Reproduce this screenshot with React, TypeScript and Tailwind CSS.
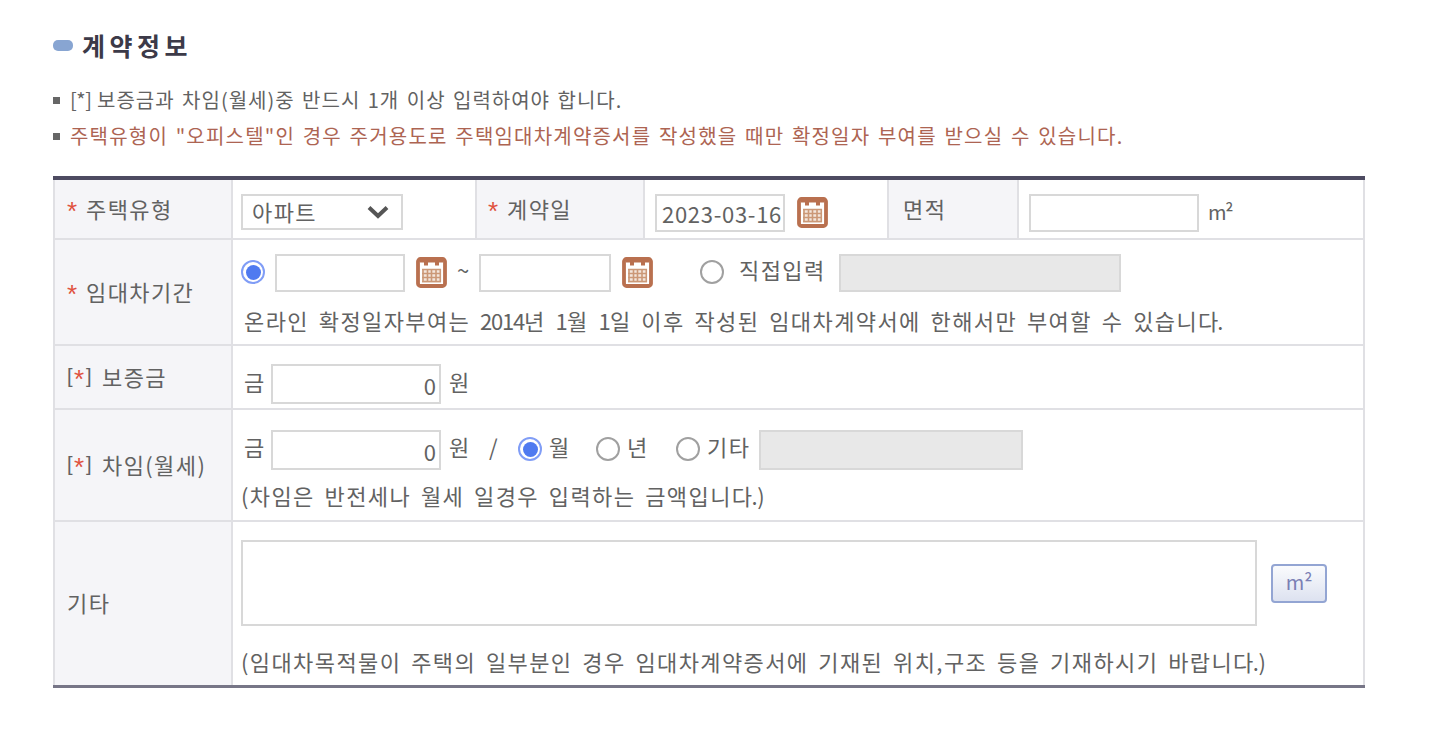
import React from 'react';
import clsx from 'clsx';

interface TextProps {
  children: React.ReactNode;
  className?: string;
}

function Label({ children, className }: TextProps) {
  return (
    <div className={clsx('flex shrink-0 items-center border-r-2 border-[#e0e0e4] bg-[#f5f5f8] pb-[3px]', className)}>
      {children}
    </div>
  );
}

function Required() {
  return <span className="w-[19px] shrink-0 pt-[6px] font-['Liberation_Sans'] text-[26px] tracking-normal text-[#e0523f]">*</span>;
}

function OneOf() {
  return (
    <span className="flex w-[35px] shrink-0 items-center font-['Liberation_Sans'] text-[20px] tracking-normal">
      <span className="w-[7px]">[</span>
      <span className="w-[11px] pt-[6px] text-[26px] text-[#e0523f]">*</span>
      <span className="pl-px">]</span>
    </span>
  );
}

function Field({ className, value, disabled }: { className?: string; value?: string; disabled?: boolean }) {
  return (
    <input
      type="text"
      defaultValue={value}
      disabled={disabled}
      className={clsx(
        'block shrink-0 border-2 border-[#d8d8d8] outline-none',
        disabled ? 'bg-[#e8e8e8]' : 'bg-white',
        className
      )}
    />
  );
}

function Radio({ checked, className }: { checked?: boolean; className?: string }) {
  return (
    <span
      className={clsx(
        'flex size-6 shrink-0 items-center justify-center rounded-full border-2 bg-white',
        checked ? 'border-[#809df6]' : 'border-[#a0a0a0]',
        className
      )}
    >
      {checked && <span className="size-[15px] rounded-full bg-[#4f7af0]" />}
    </span>
  );
}

function CalendarIcon({ className }: { className?: string }) {
  return (
    <svg viewBox="0 0 31 31" className={clsx('h-[31px] w-[31px] shrink-0', className)} fill="none">
      <rect x="2" y="2" width="27" height="27" rx="2.5" fill="#fff" stroke="#b9704f" strokeWidth="3.8" />
      <path d="M4 4h23v1.500H4z" fill="#b9704f" />
      <path d="M10 3v5.500M21 3v5.500" stroke="#b9704f" strokeWidth="4" />
      <path d="M6 12h19v14H6z" fill="#f3e6dc" />
      <path
        d="M6 12.500h19M6 16.500h19M6 20.500h19M6 24.500h19M7 12v13M11.500 12v13M15.500 12v13M20 12v13M24.300 12v13"
        stroke="#cb9877"
        strokeWidth="1.6"
      />
    </svg>
  );
}

export default function App() {
  return (
    <main className="h-[736px] w-[1438px] overflow-hidden bg-white pl-[53px] font-['Noto_Sans_CJK_KR',sans-serif] text-[22px] leading-6 tracking-[1.4px] whitespace-nowrap text-[#626262]">
      <h1 className="flex h-[86px] items-center pt-1 text-[25px] font-bold tracking-[4.500px] text-[#3c3a48]">
        <span className="mr-[9px] h-[11px] w-5 rounded-[5px] bg-[#88a5d2]" />
        계약정보
      </h1>

      <ul className="h-[90px] text-[20px]">
        <li className="flex h-7 items-center">
          <span className="mr-[10px] size-[7px] bg-[#666]" />
          <span className="w-[27px] tracking-[-0.4px]">[*]</span>
          <span className="tracking-[1px] [word-spacing:2px]">보증금과 차임(월세)중 반드시 1개 이상 입력하여야 합니다.</span>
        </li>
        <li className="mt-2 flex h-7 items-center tracking-[1.2px] text-[#ad6452] [word-spacing:2px]">
          <span className="mr-[10px] size-[7px] bg-[#666]" />
          주택유형이 "오피스텔"인 경우 주거용도로 주택임대차계약증서를 작성했을 때만 확정일자 부여를 받으실 수 있습니다.
        </li>
      </ul>

      <section className="w-[1312px] border-t-4 border-b-[3px] border-t-[#4d4b61] border-b-[#777687]">
        <div className="border-x-2 border-[#e0e0e4]">
          <div className="flex h-[60px] border-b-2 border-[#e0e0e4]">
            <Label className="w-[178px] pl-3"><Required />주택유형</Label>
            <div className="flex w-[242px] items-start pt-[14px] pl-2">
              <div className="flex h-9 w-[162px] items-center justify-between border-2 border-[#d8d8d8] pr-3 pl-[9px]">
                <span className="pb-[3px]">아파트</span>
                <svg viewBox="0 0 22 14" className="h-[14px] w-[22px]" fill="none">
                  <path d="M2 2.500L11 11L20 2.500" stroke="#555" strokeWidth="4" />
                </svg>
              </div>
            </div>
            <Label className="w-[170px] border-l-2 pl-[11px]"><Required />계약일</Label>
            <div className="flex w-[242px] items-start pt-[14px] pl-[10px]">
              <Field value="2023-03-16" className="h-[38px] w-[130px] pl-[5px] tracking-[0.7px]" />
              <CalendarIcon className="mt-[3px] ml-3" />
            </div>
            <Label className="w-[132px] border-l-2 pl-[14px]">면적</Label>
            <div className="flex items-start pt-[14px] pl-[10px]">
              <Field className="h-[38px] w-[170px]" />
              <span className="mt-[6px] ml-[9px] text-[20px] tracking-[-1.2px]">m²</span>
            </div>
          </div>

          <div className="flex h-[106px] border-b-2 border-[#e0e0e4]">
            <Label className="w-[178px] pl-3"><Required />임대차기간</Label>
            <div className="pt-[14px] pl-2">
              <div className="flex h-[38px]">
                <Radio checked className="mt-[6px]" />
                <Field className="ml-[10px] h-[38px] w-[130px]" />
                <CalendarIcon className="mt-[3px] ml-[11px]" />
                <span className="ml-[10px] w-[22px] pt-[3px]">~</span>
                <Field className="h-[38px] w-[132px]" />
                <CalendarIcon className="mt-[3px] ml-[11px]" />
                <Radio className="mt-[6px] ml-[47px]" />
                <span className="ml-[15px] w-[100px] pt-[3px]">직접입력</span>
                <Field disabled className="h-[38px] w-[282px]" />
              </div>
              <p className="mt-4 pl-[3px] tracking-[1.4px] [word-spacing:3.500px]">
                온라인 확정일자부여는 <span className="tracking-[-1.2px]">2014</span>년{' '}
                <span className="tracking-[-0.8px]">1</span>월 <span className="tracking-[-0.8px]">1</span>일 이후 작성된
                임대차계약서에 한해서만 부여할 수 있습니<span className="tracking-[-1px]">다.</span>
              </p>
            </div>
          </div>

          <div className="flex h-16 border-b-2 border-[#e0e0e4]">
            <Label className="w-[178px] pl-3"><OneOf />보증금</Label>
            <div className="flex pt-[18px] pl-[11px]">
              <span className="w-[27px] pt-[5px]">금</span>
              <Field value="0" className="h-10 w-[170px] pt-[2px] pr-[3px] text-right tracking-normal" />
              <span className="ml-2 pt-[5px]">원</span>
            </div>
          </div>

          <div className="flex h-[112px] border-b-2 border-[#e0e0e4]">
            <Label className="w-[178px] pl-3"><OneOf />차임(월세)</Label>
            <div className="pt-5 pl-2">
              <div className="flex h-10 pl-[3px]">
                <span className="w-[27px] pt-1">금</span>
                <Field value="0" className="h-10 w-[170px] pt-[2px] pr-[3px] text-right tracking-normal" />
                <span className="ml-2 w-10 pt-1">원</span>
                <span className="w-[29px] pt-1">/</span>
                <Radio checked className="mt-[7px]" />
                <span className="ml-[7px] w-[47px] pt-1">월</span>
                <Radio className="mt-[7px]" />
                <span className="ml-[7px] w-[49px] pt-1">년</span>
                <Radio className="mt-[7px]" />
                <span className="ml-[7px] w-[52px] pt-1">기타</span>
                <Field disabled className="h-10 w-[264px]" />
              </div>
              <p className="mt-[13px] tracking-[1.4px] [word-spacing:3.5px]">
                (차임은 반전세나 월세 일경우 입력하는 금액입니<span className="tracking-[-0.5px]">다.</span>)
              </p>
            </div>
          </div>

          <div className="flex h-[163px]">
            <Label className="w-[178px] pl-3">기타</Label>
            <div className="pt-[18px] pl-2">
              <div className="flex">
                <textarea className="block h-[86px] w-[1016px] resize-none border-2 border-[#d8d8d8] outline-none" />
                <button className="mt-6 ml-[14px] h-[39px] w-[56px] rounded-[4px] border-2 border-[#93a5d3] bg-linear-to-b from-[#fafbfd] to-[#dde2f0] pb-1 text-[20px] leading-5 tracking-normal text-[#7a7fb5]">
                  m²
                </button>
              </div>
              <p className="mt-[23px] tracking-[1.4px] [word-spacing:3.5px]">
                (임대차목적물이 주택의 일부분인 경우 임대차계약증서에 기재된 위치,구조 등을 기재하시기 바랍니
                <span className="tracking-[-0.5px]">다.</span>)
              </p>
            </div>
          </div>
        </div>
      </section>
    </main>
  );
}
